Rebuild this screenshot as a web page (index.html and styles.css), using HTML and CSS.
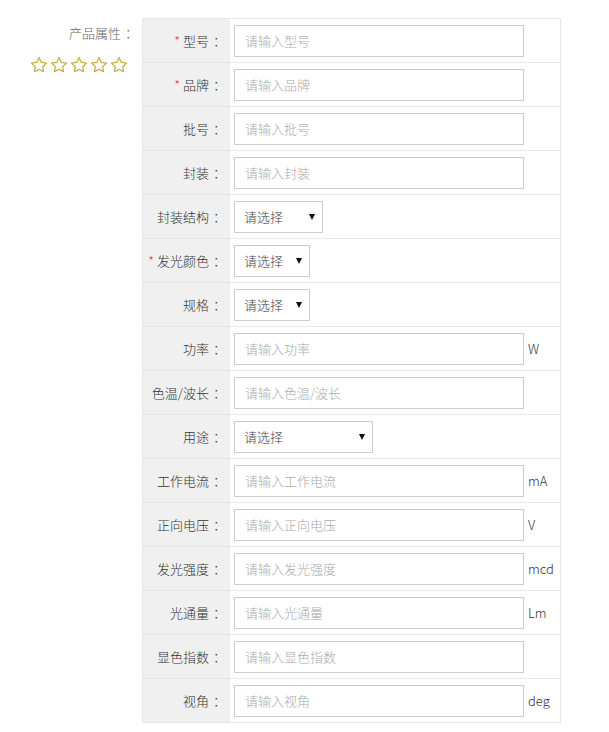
FILE: index.html
```html
<!DOCTYPE html>
<html lang="zh-CN">
<head>
  <meta charset="UTF-8" />
  <title>产品属性</title>
  <link rel="stylesheet" href="styles.css">
</head>
<body>
  <div class="attr-wrap">
    <div class="attr-side">
      <div class="side-title">产品属性<span class="colon">：</span></div>
      <div class="stars">
        <svg viewBox="0 0 20 20"><path d="M10 1.8l2.5 5.3 5.8.7-4.3 4 1.1 5.7L10 14.7l-5.1 2.8 1.1-5.7-4.3-4 5.8-.7z"/></svg>
        <svg viewBox="0 0 20 20"><path d="M10 1.8l2.5 5.3 5.8.7-4.3 4 1.1 5.7L10 14.7l-5.1 2.8 1.1-5.7-4.3-4 5.8-.7z"/></svg>
        <svg viewBox="0 0 20 20"><path d="M10 1.8l2.5 5.3 5.8.7-4.3 4 1.1 5.7L10 14.7l-5.1 2.8 1.1-5.7-4.3-4 5.8-.7z"/></svg>
        <svg viewBox="0 0 20 20"><path d="M10 1.8l2.5 5.3 5.8.7-4.3 4 1.1 5.7L10 14.7l-5.1 2.8 1.1-5.7-4.3-4 5.8-.7z"/></svg>
        <svg viewBox="0 0 20 20"><path d="M10 1.8l2.5 5.3 5.8.7-4.3 4 1.1 5.7L10 14.7l-5.1 2.8 1.1-5.7-4.3-4 5.8-.7z"/></svg>
      </div>
    </div>

    <table class="attr-table">
      <tr>
        <th><span class="req">*</span> 型号<span class="colon">：</span></th>
        <td><input type="text" placeholder="请输入型号"></td>
      </tr>
      <tr>
        <th><span class="req">*</span> 品牌<span class="colon">：</span></th>
        <td><input type="text" placeholder="请输入品牌"></td>
      </tr>
      <tr>
        <th>批号<span class="colon">：</span></th>
        <td><input type="text" placeholder="请输入批号"></td>
      </tr>
      <tr>
        <th>封装<span class="colon">：</span></th>
        <td><input type="text" placeholder="请输入封装"></td>
      </tr>
      <tr>
        <th>封装结构<span class="colon">：</span></th>
        <td><span class="sel sel-md"><select><option>请选择</option></select></span></td>
      </tr>
      <tr>
        <th><span class="req">*</span> 发光颜色<span class="colon">：</span></th>
        <td><span class="sel sel-sm"><select><option>请选择</option></select></span></td>
      </tr>
      <tr>
        <th>规格<span class="colon">：</span></th>
        <td><span class="sel sel-sm"><select><option>请选择</option></select></span></td>
      </tr>
      <tr>
        <th>功率<span class="colon">：</span></th>
        <td><input type="text" placeholder="请输入功率"><span class="unit">W</span></td>
      </tr>
      <tr>
        <th>色温/波长<span class="colon">：</span></th>
        <td><input type="text" placeholder="请输入色温/波长"></td>
      </tr>
      <tr>
        <th>用途<span class="colon">：</span></th>
        <td><span class="sel sel-lg"><select><option>请选择</option></select></span></td>
      </tr>
      <tr>
        <th>工作电流<span class="colon">：</span></th>
        <td><input type="text" placeholder="请输入工作电流"><span class="unit">mA</span></td>
      </tr>
      <tr>
        <th>正向电压<span class="colon">：</span></th>
        <td><input type="text" placeholder="请输入正向电压"><span class="unit">V</span></td>
      </tr>
      <tr>
        <th>发光强度<span class="colon">：</span></th>
        <td><input type="text" placeholder="请输入发光强度"><span class="unit">mcd</span></td>
      </tr>
      <tr>
        <th>光通量<span class="colon">：</span></th>
        <td><input type="text" placeholder="请输入光通量"><span class="unit">Lm</span></td>
      </tr>
      <tr>
        <th>显色指数<span class="colon">：</span></th>
        <td><input type="text" placeholder="请输入显色指数"></td>
      </tr>
      <tr>
        <th>视角<span class="colon">：</span></th>
        <td><input type="text" placeholder="请输入视角"><span class="unit">deg</span></td>
      </tr>
    </table>
  </div>
</body>
</html>
```

FILE: styles.css
```css
body {
  margin: 0;
  background: #fff;
  font-family: "Microsoft YaHei", "Noto Sans CJK SC", sans-serif;
  font-size: 13px;
  font-weight: 300;
  color: #333;
}

/* YaHei draws the full-width colon in the middle of its box */
.colon {
  padding-left: 4px;
  margin-right: -4px;
}

.attr-wrap {
  display: flex;
  align-items: flex-start;
  gap: 8px;
  padding-top: 18px;
}

.attr-side {
  width: 134px;
  padding-top: 6px;
  text-align: right;
}
.side-title {
  color: #666;
  line-height: 18px;
}
.stars {
  display: flex;
  justify-content: flex-end;
  gap: 2px;
  margin-top: 14px;
  padding-right: 6px;
}
.stars svg {
  width: 18px;
  height: 18px;
  fill: none;
  stroke: #c9a53c;
  stroke-width: 1.3;
  stroke-linejoin: round;
}

.attr-table {
  width: 419px;
  border-collapse: collapse;
  border: 1px solid #e6e6e6;
}
.attr-table tr {
  height: 44px;
  border-bottom: 1px solid #e6e6e6;
}
.attr-table th {
  width: 79px;
  padding: 0 8px 0 0;
  background: #f0f0f0;
  font-weight: 300;
  text-align: right;
  white-space: nowrap;
  color: #333;
}
.attr-table td {
  padding: 0 0 0 4px;
  white-space: nowrap;
}
.req {
  color: #e4393c;
}

input {
  box-sizing: border-box;
  width: 290px;
  height: 32px;
  padding: 0 10px;
  border: 1px solid #ccc;
  font-family: inherit;
  font-size: 13px;
  font-weight: 300;
  color: #333;
  vertical-align: middle;
  outline: none;
}
input::placeholder {
  color: #aaa;
}
.unit {
  margin-left: 4px;
  vertical-align: middle;
  color: #333;
}

.sel {
  position: relative;
  display: inline-block;
  vertical-align: middle;
}
.sel select {
  box-sizing: border-box;
  height: 32px;
  padding: 0 0 0 9px;
  border: 1px solid #ccc;
  background: #fff;
  font-family: inherit;
  font-size: 13px;
  font-weight: 300;
  color: #444;
  -webkit-appearance: none;
  appearance: none;
  border-radius: 0;
  outline: none;
}
.sel::after {
  content: "";
  position: absolute;
  right: 8px;
  top: 13px;
  border-left: 3px solid transparent;
  border-right: 3px solid transparent;
  border-top: 6px solid #111;
  pointer-events: none;
}
.sel-sm select { width: 76px; }
.sel-md select { width: 89px; }
.sel-lg select { width: 139px; }
```
